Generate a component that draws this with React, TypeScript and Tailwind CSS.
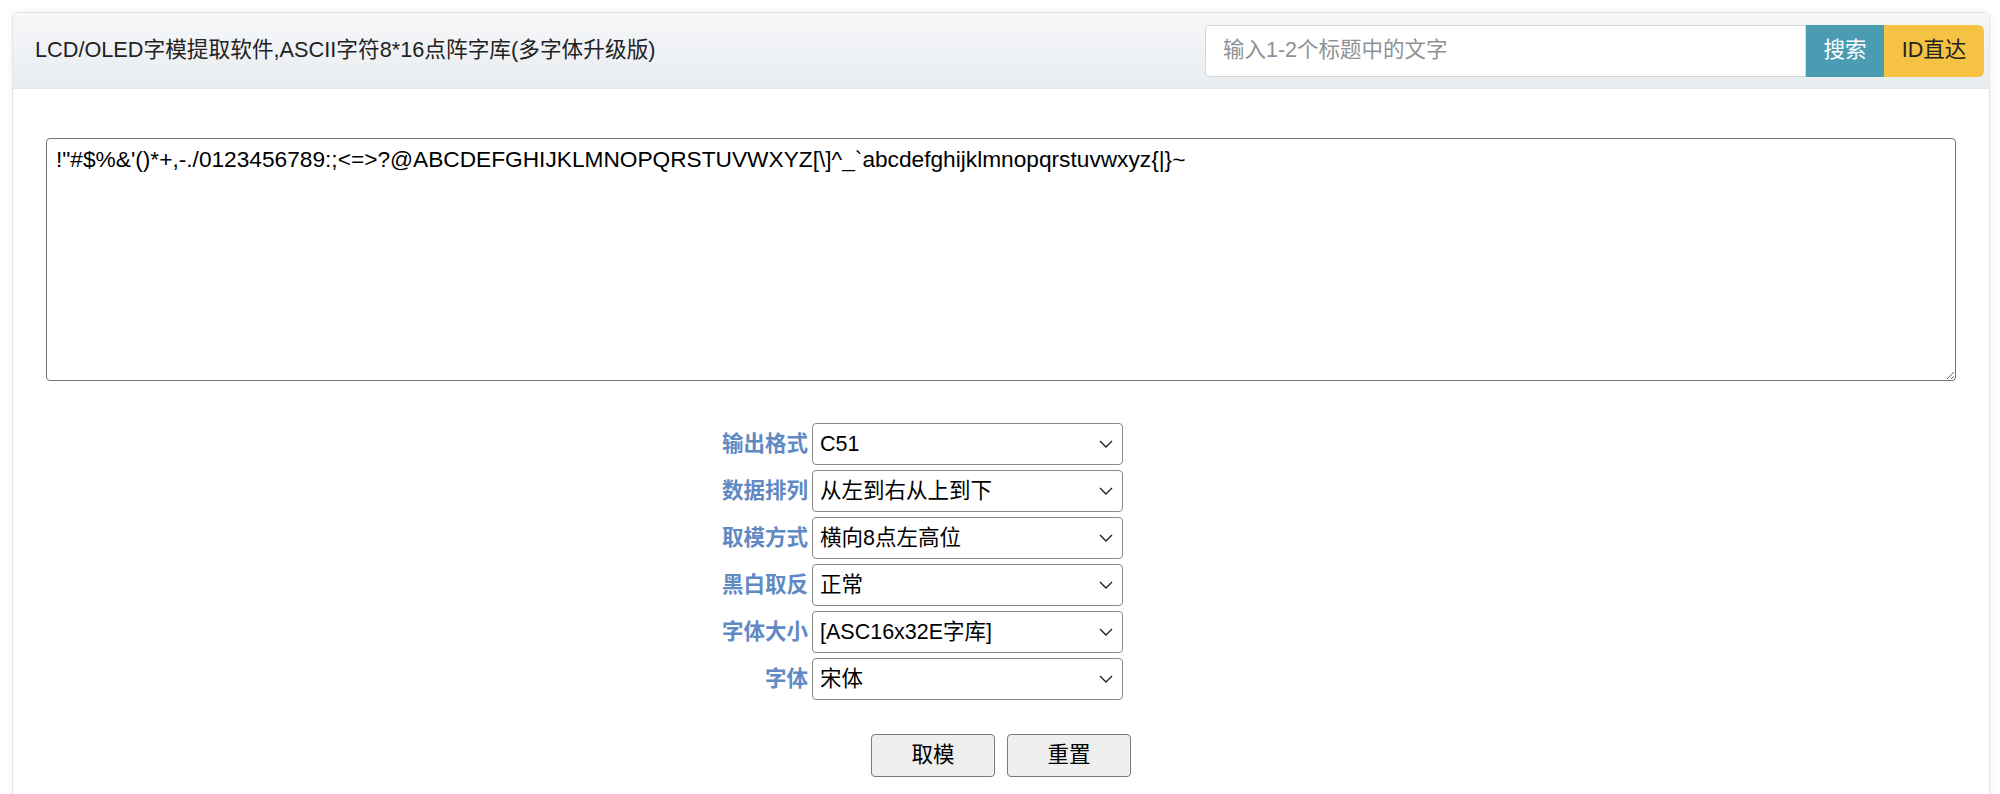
import { useState } from "react";

const FONT = '"Liberation Sans", "Noto Sans CJK SC", sans-serif';

const FIELDS = [
  { label: "输出格式", value: "C51", options: ["C51", "A51", "C语言数组"] },
  { label: "数据排列", value: "从左到右从上到下", options: ["从左到右从上到下", "从上到下从左到右"] },
  { label: "取模方式", value: "横向8点左高位", options: ["横向8点左高位", "横向8点右高位", "纵向8点上高位", "纵向8点下高位"] },
  { label: "黑白取反", value: "正常", options: ["正常", "反色"] },
  { label: "字体大小", value: "[ASC16x32E字库]", options: ["[ASC16x32E字库]", "[ASC8x16E字库]"] },
  { label: "字体", value: "宋体", options: ["宋体", "黑体", "楷体"] },
];

function Chevron() {
  return (
    <svg width="14" height="9" viewBox="0 0 14 9" className="pointer-events-none absolute right-[10px] top-1/2 -translate-y-1/2">
      <path d="M1 1.5 L7 7.5 L13 1.5" fill="none" stroke="#222" strokeWidth="1.4" />
    </svg>
  );
}

function SelectRow({ label, value, options }: { label: string; value: string; options: string[] }) {
  const [v, setV] = useState(value);
  return (
    <div className="flex items-center gap-[4px]">
      <div className="w-[120px] text-right text-[21.5px] font-bold text-[#6189c4]">{label}</div>
      <div className="relative w-[311px]">
        <select
          value={v}
          onChange={(e) => setV(e.target.value)}
          className="h-[42px] w-full appearance-none rounded-[4px] border border-[#8a8a8a] bg-white pl-[7px] pr-[30px] text-[21.5px] text-black outline-none"
          style={{ fontFamily: FONT }}
        >
          {options.map((o) => (
            <option key={o}>{o}</option>
          ))}
        </select>
        <Chevron />
      </div>
    </div>
  );
}

export default function App() {
  const [text, setText] = useState(
    "!\"#$%&'()*+,-./0123456789:;<=>?@ABCDEFGHIJKLMNOPQRSTUVWXYZ[\\]^_`abcdefghijklmnopqrstuvwxyz{|}~"
  );

  return (
    <div className="min-h-[794px] bg-white pl-[12px] pr-[10px] pt-[12px]" style={{ fontFamily: FONT }}>
      <div className="rounded-[6px] border border-[#e1e4e8] bg-white shadow-[0_0_8px_rgba(0,0,0,0.06)]">
        {/* header */}
        <div className="flex h-[76px] items-center justify-between rounded-t-[6px] border-b border-[#e3e6ea] bg-gradient-to-b from-[#f6f7f9] to-[#e9edf0] pl-[22px] pr-[5px]">
          <h1 className="text-[21.7px] font-normal text-[#222]">LCD/OLED字模提取软件,ASCII字符8*16点阵字库(多字体升级版)</h1>
          <div className="flex h-[52px]">
            <input
              placeholder="输入1-2个标题中的文字"
              className="h-full w-[601px] rounded-l-[5px] border border-[#d3d7db] bg-white px-[17px] text-[21.5px] text-[#333] placeholder-[#8e9297] outline-none"
            />
            <button className="h-full w-[78px] bg-[#4b9cb3] text-[21.5px] text-white">搜索</button>
            <button className="h-full w-[100px] rounded-r-[6px] bg-[#f6c244] text-[21.5px] text-[#222]">ID直达</button>
          </div>
        </div>

        {/* body */}
        <div className="px-[33px] pb-[40px] pt-[49px]">
          <textarea
            value={text}
            onChange={(e) => setText(e.target.value)}
            className="block h-[243px] w-full rounded-[4px] border border-[#767676] px-[9px] py-[5px] text-[22.7px] leading-[30px] text-black outline-none"
            style={{ fontFamily: FONT }}
          />

          <div className="ml-[642px] mt-[42px] flex flex-col gap-[5px]">
            {FIELDS.map((f) => (
              <SelectRow key={f.label} label={f.label} value={f.value} options={f.options} />
            ))}
          </div>

          <div className="mt-[34px] flex justify-center gap-[12px]">
            <button className="h-[43px] w-[124px] rounded-[4px] border border-[#7a7a7a] bg-[#efefef] text-[21.5px] text-black">
              取模
            </button>
            <button className="h-[43px] w-[124px] rounded-[4px] border border-[#7a7a7a] bg-[#efefef] text-[21.5px] text-black">
              重置
            </button>
          </div>
        </div>
      </div>
    </div>
  );
}
